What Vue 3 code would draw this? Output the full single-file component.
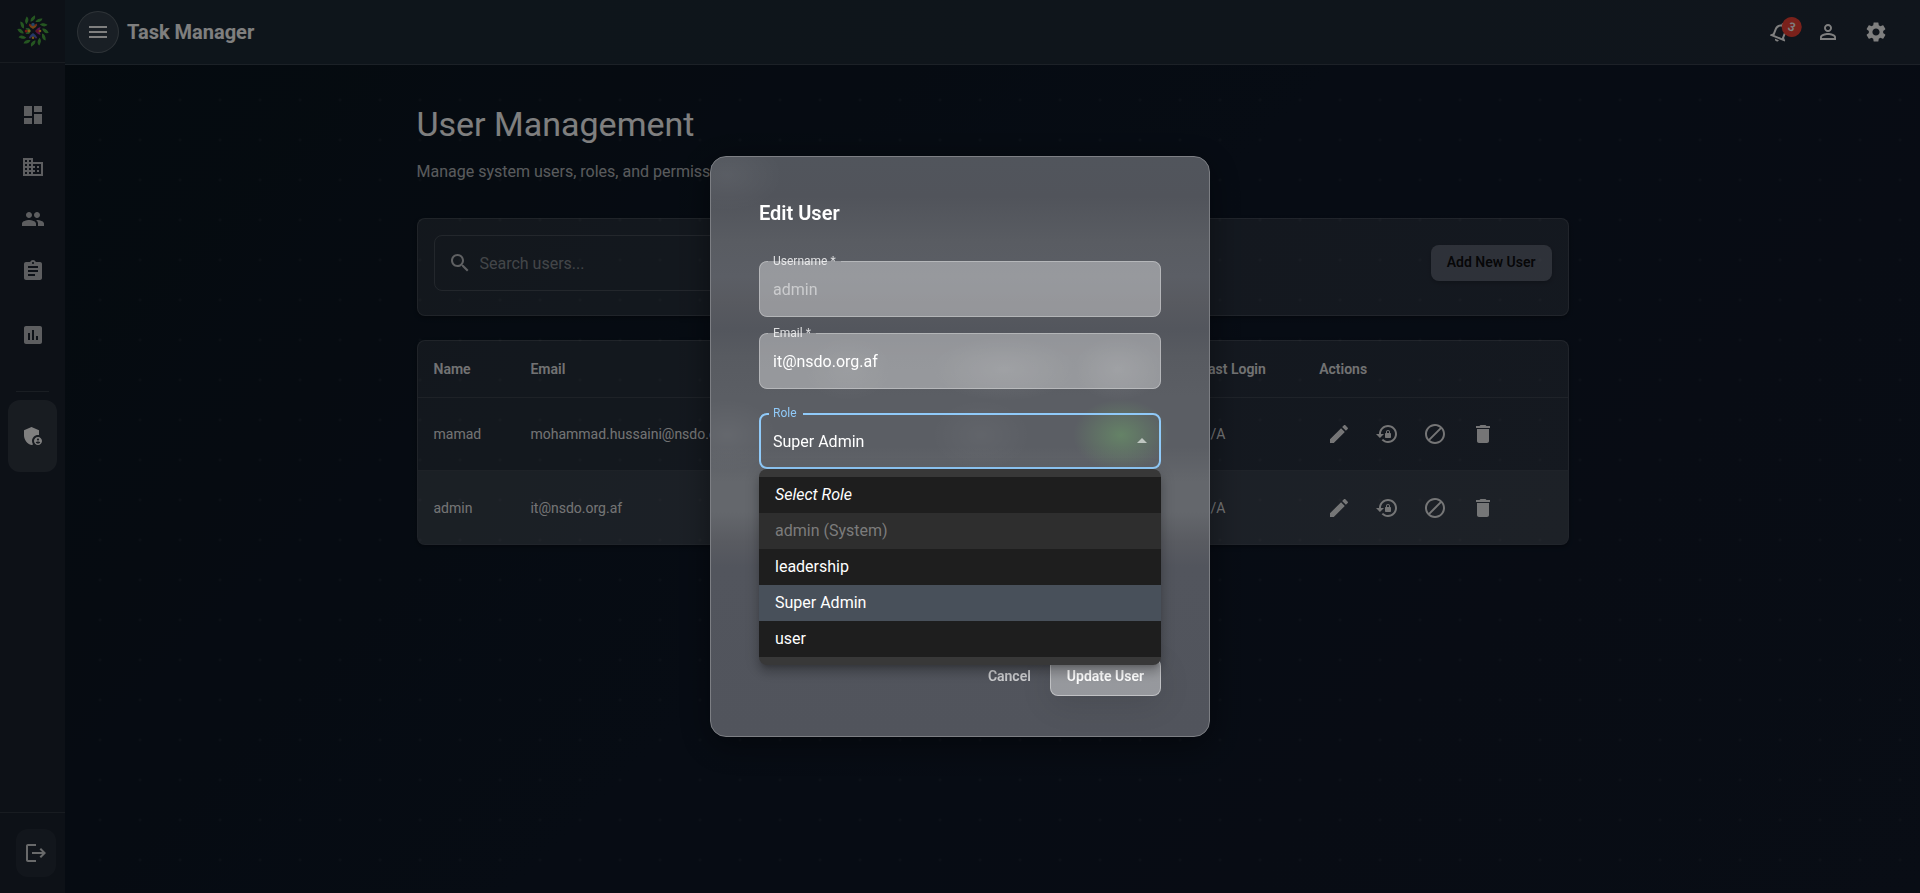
<script setup>
import { ref } from 'vue'

const paths = {
  menu: 'M3 18h18v-2H3v2zm0-5h18v-2H3v2zm0-7v2h18V6H3z',
  dashboard: 'M3 13h8V3H3v10zm0 8h8v-6H3v6zm10 0h8V11h-8v10zm0-18v6h8V3h-8z',
  business: 'M12 7V3H2v18h20V7H12zM6 19H4v-2h2v2zm0-4H4v-2h2v2zm0-4H4V9h2v2zm0-4H4V5h2v2zm4 12H8v-2h2v2zm0-4H8v-2h2v2zm0-4H8V9h2v2zm0-4H8V5h2v2zm10 12h-8v-2h2v-2h-2v-2h2v-2h-2V9h8v10zm-2-8h-2v2h2v-2zm0 4h-2v2h2v-2z',
  people: 'M16 11c1.66 0 2.99-1.34 2.99-3S17.66 5 16 5c-1.66 0-3 1.34-3 3s1.34 3 3 3zm-8 0c1.66 0 2.99-1.34 2.99-3S9.66 5 8 5C6.34 5 5 6.34 5 8s1.34 3 3 3zm0 2c-2.33 0-7 1.17-7 3.5V19h14v-2.5c0-2.33-4.67-3.5-7-3.5zm8 0c-.29 0-.62.02-.97.05 1.16.84 1.97 1.97 1.97 3.45V19h6v-2.5c0-2.33-4.67-3.5-7-3.5z',
  assignment: 'M19 3h-4.18C14.4 1.84 13.3 1 12 1c-1.3 0-2.4.84-2.82 2H5c-1.1 0-2 .9-2 2v14c0 1.1.9 2 2 2h14c1.1 0 2-.9 2-2V5c0-1.1-.9-2-2-2zm-7 0c.55 0 1 .45 1 1s-.45 1-1 1-1-.45-1-1 .45-1 1-1zm2 14H7v-2h7v2zm3-4H7v-2h10v2zm0-4H7V7h10v2z',
  assessment: 'M19 3H5c-1.1 0-2 .9-2 2v14c0 1.1.9 2 2 2h14c1.1 0 2-.9 2-2V5c0-1.1-.9-2-2-2zM9 17H7v-7h2v7zm4 0h-2V7h2v10zm4 0h-2v-4h2v4z',
  admin: 'M17 11c.34 0 .67.04 1 .09V6.27L10.5 3 3 6.27v4.91c0 4.54 3.2 8.79 7.5 9.82.55-.13 1.08-.32 1.6-.55-.69-.98-1.1-2.17-1.1-3.45 0-3.31 2.69-6 6-6zM17 13c-2.21 0-4 1.79-4 4s1.79 4 4 4 4-1.79 4-4-1.79-4-4-4zm0 1.38c.62 0 1.12.51 1.12 1.12s-.51 1.12-1.12 1.12-1.12-.51-1.12-1.12.5-1.12 1.12-1.12zm0 5.37c-.93 0-1.74-.46-2.24-1.17.05-.72 1.51-1.08 2.24-1.08s2.19.36 2.24 1.08c-.5.71-1.31 1.17-2.24 1.17z',
  logout: 'm17 7-1.41 1.41L18.17 11H8v2h10.17l-2.58 2.58L17 17l5-5zM4 5h8V3H4c-1.1 0-2 .9-2 2v14c0 1.1.9 2 2 2h8v-2H4V5z',
  bell: 'M12 22c1.1 0 2-.9 2-2h-4c0 1.1.89 2 2 2zm6-6v-5c0-3.07-1.64-5.64-4.5-6.32V4c0-.83-.67-1.5-1.5-1.5s-1.5.67-1.5 1.5v.68C7.63 5.36 6 7.92 6 11v5l-2 2v1h16v-1l-2-2zm-2 1H8v-6c0-2.48 1.51-4.5 4-4.5s4 2.02 4 4.5v6z',
  person: 'M12 5.9c1.16 0 2.1.94 2.1 2.1s-.94 2.1-2.1 2.1S9.9 9.16 9.9 8s.94-2.1 2.1-2.1m0 9c2.97 0 6.1 1.46 6.1 2.1v1.1H5.9V17c0-.64 3.13-2.1 6.1-2.1M12 4C9.79 4 8 5.79 8 8s1.79 4 4 4 4-1.79 4-4-1.79-4-4-4zm0 9c-2.67 0-8 1.34-8 4v3h16v-3c0-2.66-5.33-4-8-4z',
  settings: 'M19.14 12.94c.04-.3.06-.61.06-.94 0-.32-.02-.64-.07-.94l2.03-1.58c.18-.14.23-.41.12-.61l-1.92-3.32c-.12-.22-.37-.29-.59-.22l-2.39.96c-.5-.38-1.03-.7-1.62-.94l-.36-2.54c-.04-.24-.24-.41-.48-.41h-3.84c-.24 0-.43.17-.47.41l-.36 2.54c-.59.24-1.13.57-1.62.94l-2.39-.96c-.22-.08-.47 0-.59.22L2.74 8.87c-.12.21-.08.47.12.61l2.03 1.58c-.05.3-.09.63-.09.94s.02.64.07.94l-2.03 1.58c-.18.14-.23.41-.12.61l1.92 3.32c.12.22.37.29.59.22l2.39-.96c.5.38 1.03.7 1.62.94l.36 2.54c.05.24.24.41.48.41h3.84c.24 0 .44-.17.47-.41l.36-2.54c.59-.24 1.13-.56 1.62-.94l2.39.96c.22.08.47 0 .59-.22l1.92-3.32c.12-.22.07-.47-.12-.61l-2.01-1.58zM12 15.6c-1.98 0-3.6-1.62-3.6-3.6s1.62-3.6 3.6-3.6 3.6 1.62 3.6 3.6-1.62 3.6-3.6 3.6z',
  search: 'M15.5 14h-.79l-.28-.27C15.41 12.59 16 11.11 16 9.5 16 5.91 13.09 3 9.5 3S3 5.91 3 9.5 5.91 16 9.5 16c1.61 0 3.09-.59 4.23-1.57l.27.28v.79l5 4.99L20.49 19l-4.99-5zm-6 0C7.01 14 5 11.99 5 9.5S7.01 5 9.5 5 14 7.01 14 9.5 11.99 14 9.5 14z',
  edit: 'M3 17.25V21h3.75L17.81 9.94l-3.75-3.75L3 17.25zM20.71 7.04c.39-.39.39-1.02 0-1.41l-2.34-2.34c-.39-.39-1.02-.39-1.41 0l-1.83 1.83 3.75 3.75 1.83-1.83z',
  lockReset: 'M13 3c-4.97 0-9 4.03-9 9H1l3.89 3.89.07.14L9 12H6c0-3.87 3.13-7 7-7s7 3.13 7 7-3.13 7-7 7c-1.93 0-3.68-.79-4.94-2.06l-1.42 1.42C8.27 19.99 10.51 21 13 21c4.97 0 9-4.03 9-9s-4.03-9-9-9zm2 8v-1c0-1.1-.9-2-2-2s-2 .9-2 2v1c-.55 0-1 .45-1 1v3c0 .55.45 1 1 1h4c.55 0 1-.45 1-1v-3c0-.55-.45-1-1-1zm-1 0h-2v-1c0-.55.45-1 1-1s1 .45 1 1v1z',
  block: 'M12 2C6.48 2 2 6.48 2 12s4.48 10 10 10 10-4.48 10-10S17.52 2 12 2zM4 12c0-4.42 3.58-8 8-8 1.85 0 3.55.63 4.9 1.69L5.69 16.9C4.63 15.55 4 13.85 4 12zm8 8c-1.85 0-3.55-.63-4.9-1.69L18.31 7.1C19.37 8.45 20 10.15 20 12c0 4.42-3.58 8-8 8z',
  delete: 'M6 19c0 1.1.9 2 2 2h8c1.1 0 2-.9 2-2V7H6v12zM19 4h-3.5l-1-1h-5l-1 1H5v2h14V4z',
  arrowUp: 'M7 14l5-5 5 5z'
}

const navItems = [
  { icon: 'dashboard', label: 'Dashboard' },
  { icon: 'business', label: 'Offices' },
  { icon: 'people', label: 'Teams' },
  { icon: 'assignment', label: 'Tasks' }
]

const actions = [
  { icon: 'edit', label: 'Edit' },
  { icon: 'lockReset', label: 'Reset password' },
  { icon: 'block', label: 'Deactivate' },
  { icon: 'delete', label: 'Delete' }
]

const users = [
  { name: 'mamad', email: 'mohammad.hussaini@nsdo.org.af', login: 'N/A' },
  { name: 'admin', email: 'it@nsdo.org.af', login: 'N/A' }
]

const roles = [
  { label: 'Select Role', placeholder: true },
  { label: 'admin (System)', disabled: true },
  { label: 'leadership' },
  { label: 'Super Admin' },
  { label: 'user' }
]

const search = ref('')
const username = ref('admin')
const email = ref('it@nsdo.org.af')
const role = ref('Super Admin')
</script>

<template>
  <div class="app">
    <aside class="sidebar">
      <div class="brand">
        <svg class="logo" viewBox="-16 -16 32 32" aria-hidden="true">
          <g v-for="n in 12" :key="n" :transform="`rotate(${n * 30})`">
            <path d="M-3 .3Q-1.200-2 3-.8Q1.200 2 -3 .3z" fill="#4caf43" stroke="#4caf43" stroke-width="1" transform="translate(0 -12.200) rotate(-45)" />
          </g>
          <path d="M-4-7.500L0-5L4-7.500L3-4L0-2L-3-4z" fill="#e8842a" />
          <circle cx="0" cy="-6.500" r="1.700" fill="#4a86c8" />
          <circle cx="-3.200" cy="-5.800" r="1" fill="#e0402f" />
          <circle cx="3.200" cy="-5.800" r="1" fill="#e0402f" />
          <path d="M-7.500-3L-4-3L-2 0L-4 3L-7.500 3L-5.500 0z" fill="#3d9f4a" />
          <circle cx="-6.800" cy="0" r="1.500" fill="#f0302e" />
          <circle cx="-4" cy="0" r="1.400" fill="#f0c22a" />
          <path d="M7.500-4L5-3L2 0L5 3L7.500 4L6.500 0z" fill="#b02a9a" />
          <circle cx="4.400" cy="0" r="1.500" fill="#c02545" />
          <circle cx="7" cy="0" r="1.300" fill="#f0b22a" />
          <path d="M-4 7L-2.500 4L0 2L2.500 4L4 7L0 5.500z" fill="#4a6fd0" />
          <circle cx="0" cy="6.800" r="1.300" fill="#f0b22a" />
          <circle cx="-3" cy="6.400" r="1" fill="#7a4ab8" />
          <circle cx="3" cy="6.400" r="1" fill="#7a4ab8" />
        </svg>
      </div>
      <nav class="nav">
        <a v-for="item in navItems" :key="item.icon" class="nav-item" href="#" :aria-label="item.label">
          <svg class="icon" viewBox="0 0 24 24"><path :d="paths[item.icon]" /></svg>
        </a>
        <a class="nav-item reports" href="#" aria-label="Reports">
          <svg class="icon" viewBox="0 0 24 24"><path :d="paths.assessment" /></svg>
        </a>
        <hr class="divider">
        <a class="nav-item current" href="#" aria-label="User management" aria-current="page">
          <svg class="icon" viewBox="0 0 24 24"><path :d="paths.admin" /></svg>
        </a>
      </nav>
      <div class="sidebar-foot">
        <button class="logout" type="button" aria-label="Log out">
          <svg class="icon" viewBox="0 0 24 24"><path :d="paths.logout" /></svg>
        </button>
      </div>
    </aside>

    <div class="page">
      <header class="topbar">
        <button class="menu-button" type="button" aria-label="Toggle menu">
          <svg class="icon" viewBox="0 0 24 24"><path :d="paths.menu" /></svg>
        </button>
        <span class="app-name">Task Manager</span>
        <div class="tools">
          <button class="icon-button bell" type="button" aria-label="Notifications">
            <svg class="icon" viewBox="0 0 24 24"><path :d="paths.bell" /></svg>
            <span class="badge">3</span>
          </button>
          <button class="icon-button" type="button" aria-label="Profile">
            <svg class="icon" viewBox="0 0 24 24"><path :d="paths.person" /></svg>
          </button>
          <button class="icon-button" type="button" aria-label="Settings">
            <svg class="icon" viewBox="0 0 24 24"><path :d="paths.settings" /></svg>
          </button>
        </div>
      </header>

      <main class="content">
        <h1 class="title">User Management</h1>
        <p class="subtitle">Manage system users, roles, and permissions</p>

        <section class="card toolbar">
          <label class="search">
            <svg class="icon" viewBox="0 0 24 24"><path :d="paths.search" /></svg>
            <input v-model="search" type="text" placeholder="Search users..." aria-label="Search users">
          </label>
          <button class="add-button" type="button">Add New User</button>
        </section>

        <section class="card">
          <table class="table">
            <colgroup>
              <col class="c-name"><col class="c-email"><col class="c-login"><col>
            </colgroup>
            <thead>
              <tr>
                <th>Name</th>
                <th>Email</th>
                <th>Last Login</th>
                <th>Actions</th>
              </tr>
            </thead>
            <tbody>
              <tr v-for="user in users" :key="user.name">
                <td>{{ user.name }}</td>
                <td>{{ user.email }}</td>
                <td>{{ user.login }}</td>
                <td>
                  <div class="actions">
                    <button v-for="a in actions" :key="a.icon" class="icon-button" type="button" :aria-label="a.label">
                      <svg class="icon" viewBox="0 0 24 24"><path :d="paths[a.icon]" /></svg>
                    </button>
                  </div>
                </td>
              </tr>
            </tbody>
          </table>
        </section>
      </main>
    </div>

    <div class="backdrop">
      <form class="dialog" role="dialog" aria-modal="true" aria-labelledby="dialog-title" @submit.prevent>
        <h2 id="dialog-title" class="dialog-title">Edit User</h2>

        <div class="field filled">
          <label class="label" for="username">Username *</label>
          <input id="username" v-model="username" class="control" type="text" disabled>
          <fieldset class="outline" aria-hidden="true"><legend>Username *</legend></fieldset>
        </div>

        <div class="field filled">
          <label class="label" for="email">Email *</label>
          <input id="email" v-model="email" class="control" type="email">
          <fieldset class="outline" aria-hidden="true"><legend>Email *</legend></fieldset>
        </div>

        <div class="field focused">
          <label class="label" for="role">Role</label>
          <select id="role" v-model="role" class="control">
            <option v-for="r in roles" :key="r.label" :disabled="r.disabled">{{ r.label }}</option>
          </select>
          <svg class="icon arrow" viewBox="0 0 24 24"><path :d="paths.arrowUp" /></svg>
          <fieldset class="outline" aria-hidden="true"><legend>Role</legend></fieldset>
          <ul class="menu" role="listbox" aria-label="Role">
            <li
              v-for="r in roles"
              :key="r.label"
              class="option"
              :class="{ selected: r.label === role, disabled: r.disabled, placeholder: r.placeholder }"
              role="option"
              :aria-selected="r.label === role"
              @click="!r.disabled && (role = r.label)"
            >{{ r.label }}</li>
          </ul>
        </div>

        <div class="dialog-actions">
          <button class="cancel" type="button">Cancel</button>
          <button class="submit" type="submit">Update User</button>
        </div>
      </form>
    </div>
  </div>
</template>

<style>
body {
  background: #0a1929;
}
</style>

<style scoped>
.app,
.app * {
  box-sizing: border-box;
}

.app {
  display: flex;
  min-height: 100vh;
  color: #fff;
  font-family: Roboto, "Liberation Sans", sans-serif;
  font-size: 14px;
  background:
    radial-gradient(circle at 20px 20px, rgba(255, 255, 255, 0.04) 1px, transparent 2px) 0 0 / 40px 40px,
    linear-gradient(135deg, #0a151e 0%, #0e1828 50%, #121a2a 100%);
}

button,
input,
select {
  font: inherit;
  color: inherit;
}

button {
  border: 0;
  padding: 0;
  background: none;
  cursor: pointer;
}

.icon {
  display: block;
  width: 24px;
  height: 24px;
  fill: currentColor;
}

/* Sidebar */
.sidebar {
  display: flex;
  flex-direction: column;
  flex: none;
  width: 65px;
  background: #1a222e;
}

.brand {
  display: flex;
  align-items: center;
  justify-content: center;
  height: 63px;
  border-bottom: 1px solid rgba(255, 255, 255, 0.1);
}

.logo {
  width: 32px;
  height: 32px;
}

.nav {
  display: flex;
  flex-direction: column;
  flex: 1;
  gap: 4px;
  padding: 28px 8px;
  color: rgba(255, 255, 255, 0.7);
}

.nav-item {
  display: flex;
  align-items: center;
  justify-content: center;
  height: 48px;
  border-radius: 12px;
  color: inherit;
}

.reports {
  margin-top: 12px;
}

.divider {
  width: 33px;
  height: 1px;
  margin: 28px 8px 4px;
  border: 0;
  background: rgba(255, 255, 255, 0.12);
}

.current {
  height: 72px;
  color: #fff;
  background: rgba(255, 255, 255, 0.1);
}

.sidebar-foot {
  padding: 16px 8px 16px 16px;
  border-top: 1px solid rgba(255, 255, 255, 0.1);
}

.logout {
  display: flex;
  align-items: center;
  justify-content: center;
  width: 40px;
  height: 48px;
  border-radius: 12px;
  color: rgba(255, 255, 255, 0.8);
  background: rgba(255, 255, 255, 0.05);
}

/* Top bar */
.page {
  flex: 1;
  min-width: 0;
}

.topbar {
  display: flex;
  align-items: center;
  height: 65px;
  padding: 0 24px 0 12px;
  border-bottom: 1px solid rgba(255, 255, 255, 0.12);
  background: linear-gradient(90deg, #1c2a36, #202a38);
}

.menu-button {
  display: flex;
  align-items: center;
  justify-content: center;
  width: 42px;
  height: 42px;
  border: 1px solid rgba(255, 255, 255, 0.2);
  border-radius: 50%;
  background: rgba(255, 255, 255, 0.1);
}

.app-name {
  margin-left: 8px;
  font-size: 20px;
  font-weight: 700;
}

.tools {
  display: flex;
  gap: 8px;
  margin-left: auto;
}

.icon-button {
  display: flex;
  align-items: center;
  justify-content: center;
  width: 40px;
  height: 40px;
}

.bell {
  position: relative;
  transform: rotate(22deg);
}

.badge {
  position: absolute;
  top: 1px;
  right: 1px;
  width: 20px;
  height: 20px;
  border-radius: 50%;
  font-size: 12px;
  font-weight: 600;
  line-height: 20px;
  text-align: center;
  background: #f44336;
}

/* Content */
.content {
  max-width: 1200px;
  margin: 0 auto;
  padding: 38px 24px;
}

.title {
  margin: 0;
  font-size: 34px;
  font-weight: 400;
  line-height: 42px;
}

.subtitle {
  margin: 15px 0 34px;
  font-size: 16px;
  line-height: 24px;
  color: rgba(255, 255, 255, 0.7);
}

.card {
  border: 1px solid rgba(255, 255, 255, 0.12);
  border-radius: 8px;
  overflow: hidden;
  background: rgba(255, 255, 255, 0.11);
  box-shadow: 0 2px 4px rgba(0, 0, 0, 0.3);
}

.toolbar {
  display: flex;
  align-items: center;
  justify-content: space-between;
  margin-bottom: 24px;
  padding: 16px 16px 24px;
}

.search {
  display: flex;
  align-items: center;
  gap: 8px;
  width: 400px;
  height: 56px;
  padding: 0 13px;
  border: 1px solid rgba(255, 255, 255, 0.15);
  border-radius: 8px;
  color: rgba(255, 255, 255, 0.7);
}

.search input {
  flex: 1;
  min-width: 0;
  border: 0;
  padding: 0;
  outline: 0;
  font-size: 16px;
  background: none;
}

.search input::placeholder {
  color: rgba(255, 255, 255, 0.45);
  opacity: 1;
}

.add-button {
  height: 36px;
  padding: 0 16px 2px;
  border-radius: 8px;
  font-weight: 600;
  color: rgba(0, 0, 0, 0.87);
  background: rgba(235, 235, 255, 0.27);
  box-shadow: 0 2px 4px rgba(0, 0, 0, 0.2);
}

.table {
  width: 100%;
  border-collapse: separate;
  border-spacing: 0;
  table-layout: fixed;
}

.c-name { width: 8.430%; }
.c-email { width: 58.260%; }
.c-login { width: 10.330%; }

.table th,
.table td {
  height: 73px;
  padding: 0 16px;
  border-bottom: 1px solid rgba(255, 255, 255, 0.1);
  text-align: left;
  font-weight: 400;
  white-space: nowrap;
  color: rgba(255, 255, 255, 0.9);
}

.table th {
  height: 57px;
  font-weight: 600;
}

.table tbody tr:last-child td {
  border-bottom: 0;
  background: rgba(255, 255, 255, 0.08);
}

.actions {
  display: flex;
  gap: 8px;
}

/* Dialog */
.backdrop {
  position: fixed;
  inset: 0;
  display: flex;
  align-items: center;
  justify-content: center;
  background: rgba(0, 0, 0, 0.5);
}

/* Frosted surface: soft bands and spots of light over a slate base */
.dialog {
  width: 500px;
  max-width: calc(100% - 32px);
  padding: 40px 48px;
  border: 1px solid #7d7f84;
  border-radius: 16px;
  background:
    radial-gradient(48px 36px at 410px 278px, rgba(106, 150, 104, 0.65), rgba(106, 150, 104, 0)),
    radial-gradient(72px 32px at 293px 212px, rgba(255, 255, 255, 0.09), transparent),
    radial-gradient(44px 32px at 407px 212px, rgba(255, 255, 255, 0.09), transparent),
    radial-gradient(44px 32px at 137px 212px, rgba(255, 255, 255, 0.05), transparent),
    radial-gradient(50px 36px at 16px 278px, rgba(255, 255, 255, 0.06), transparent),
    radial-gradient(50px 36px at 270px 278px, rgba(255, 255, 255, 0.04), transparent),
    radial-gradient(56px 36px at 16px 18px, rgba(255, 255, 255, 0.05), transparent),
    linear-gradient(180deg, #51555c 0, #51545b 40px, #595c62 84px, #5b5e65 120px, #585a60 145px, #53565d 172px, #585b61 200px, #5b5e64 240px, #5b5e64 290px, #64676c 325px, #64676c 355px, #595b61 385px, #52555d 410px, #51545c 100%);
  box-shadow: 0 8px 32px rgba(0, 0, 0, 0.4);
}

.dialog-title {
  margin: 0 0 32px;
  font-size: 20px;
  font-weight: 600;
  line-height: 32px;
}

.field {
  position: relative;
  height: 56px;
  margin-bottom: 16px;
  border-radius: 8px;
}

.filled {
  background: rgba(255, 255, 255, 0.37);
}

.focused {
  margin: 24px 0 0;
}

.control {
  display: block;
  width: 100%;
  height: 56px;
  padding: 0 14px;
  border: 0;
  outline: 0;
  font-size: 16px;
  color: #fff;
  background: none;
  appearance: none;
}

.control:disabled {
  color: rgba(255, 255, 255, 0.5);
}

.label {
  position: absolute;
  top: -8px;
  left: 14px;
  font-size: 12px;
  line-height: 16px;
  color: rgba(255, 255, 255, 0.8);
}

.focused .label {
  color: #90caf9;
}

.outline {
  position: absolute;
  inset: -5px 0 0;
  min-width: 0;
  margin: 0;
  padding: 0 8px;
  border: 1px solid rgba(255, 255, 255, 0.3);
  border-radius: 8px;
  pointer-events: none;
}

.outline legend {
  height: 11px;
  padding: 0 5px;
  font-size: 12px;
  line-height: 11px;
  visibility: hidden;
}

.focused .outline {
  border: 2px solid #90caf9;
}

.arrow {
  position: absolute;
  top: 16px;
  right: 7px;
  color: rgba(255, 255, 255, 0.6);
  pointer-events: none;
}

.menu {
  position: absolute;
  z-index: 1;
  top: 56px;
  left: 0;
  right: 0;
  margin: 0;
  padding: 8px 0;
  border-radius: 8px;
  list-style: none;
  font-size: 16px;
  background: #383838;
  box-shadow: 0 5px 5px -3px rgba(0, 0, 0, 0.2), 0 8px 10px 1px rgba(0, 0, 0, 0.14), 0 3px 14px 2px rgba(0, 0, 0, 0.12);
}

.option {
  height: 36px;
  padding: 0 16px;
  line-height: 36px;
  background: #1e1e1e;
  cursor: pointer;
}

.option.placeholder {
  font-style: italic;
}

.option.disabled {
  color: #7c7c7c;
  background: #2e2e2e;
}

.option.selected {
  background: #48505a;
}

.dialog-actions {
  display: flex;
  justify-content: flex-end;
  gap: 11px;
  margin-top: 189px;
}

.cancel {
  padding: 0 8px 2px;
  font-weight: 600;
  color: rgba(255, 255, 255, 0.7);
}

.submit {
  height: 38px;
  padding: 0 16px 2px;
  border: 1px solid rgba(255, 255, 255, 0.4);
  border-radius: 8px;
  font-weight: 600;
  background: rgba(255, 255, 255, 0.4);
  box-shadow: 0 8px 32px rgba(0, 0, 0, 0.1);
}
</style>
